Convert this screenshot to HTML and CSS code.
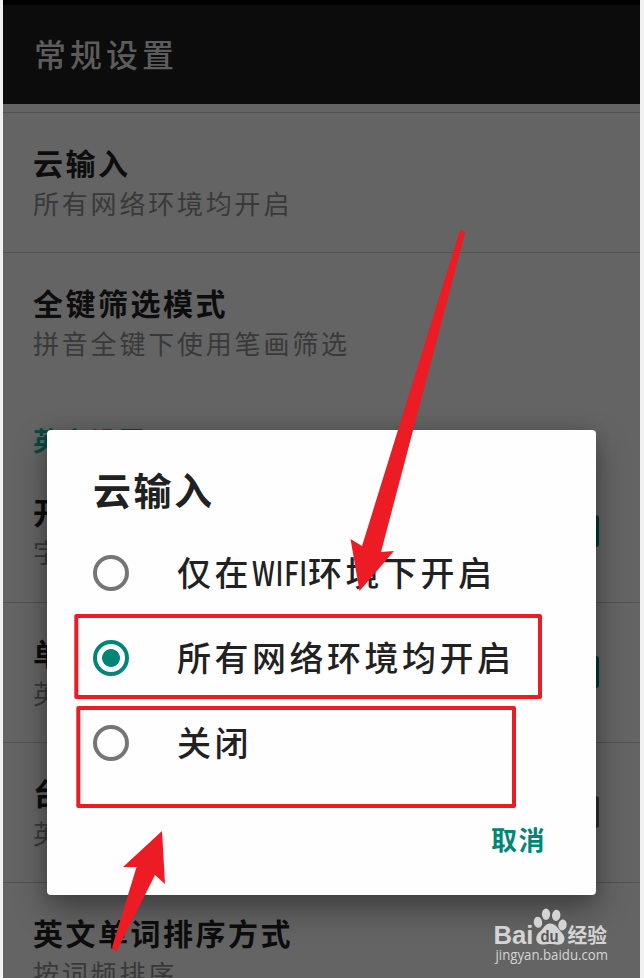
FILE: index.html
```html
<!DOCTYPE html>
<html lang="zh-CN">
<head>
<meta charset="utf-8">
<title>常规设置</title>
<link rel="stylesheet" href="styles.css">
</head>
<body>
<div class="screen">
  <div class="status"></div>
  <header class="bar">常规设置</header>
  <main class="list">
    <section class="row"><div class="name">云输入</div><div class="desc">所有网络环境均开启</div></section>
    <section class="row"><div class="name">全键筛选模式</div><div class="desc">拼音全键下使用笔画筛选</div></section>
    <h2 class="category">英文设置</h2>
    <section class="row first"><div class="name">开</div><div class="desc">字</div><span class="check"></span></section>
    <section class="row"><div class="name">单</div><div class="desc">英</div><span class="check"></span></section>
    <section class="row"><div class="name">台</div><div class="desc">英</div><span class="check off"></span></section>
    <section class="row"><div class="name">英文单词排序方式</div><div class="desc">按词频排序</div></section>
  </main>
  <div class="dialog">
    <div class="dialog-title">云输入</div>
    <div class="option"><span class="radio"></span><span>仅在<span class="latin"><span>WIFI</span></span>环境下开启</span></div>
    <div class="option"><span class="radio on"></span><span>所有网络环境均开启</span></div>
    <div class="option"><span class="radio"></span><span>关闭</span></div>
    <div class="actions"><span>取消</span></div>
  </div>
</div>
<svg class="marks" width="644" height="978" viewBox="0 0 644 978">
  <g fill="none" stroke="#ed1c24" stroke-width="4" stroke-linejoin="round">
    <rect x="76.3" y="616" width="463.7" height="81"/>
    <rect x="78.3" y="708" width="435.7" height="98"/>
  </g>
  <g fill="#ed1c24">
    <path d="M459.3 232.2Q460.5 229.5 463 230.3Q465.3 231.3 464.8 234L381 552L394 551L359.500 591L350.500 539L362 546Z"/>
    <path d="M162 831L165 884L155 875L117.500 949.500Q115.500 951.800 113.500 950.300Q111.700 949 112.300 946.500L136.500 867L123 867Z"/>
  </g>
</svg>
<svg class="watermark" width="130" height="70" viewBox="485 900 130 70">
  <g fill="#d4d4d4">
    <text class="brand" x="493.500" y="943.500" textLength="40" lengthAdjust="spacingAndGlyphs">Bai</text>
    <ellipse cx="538" cy="922.300" rx="4.200" ry="5.500" transform="rotate(-8 538 922.300)"/>
    <ellipse cx="546" cy="914.300" rx="4.100" ry="5.700"/>
    <ellipse cx="556.200" cy="915.300" rx="4.200" ry="5.600" transform="rotate(8 556.200 915.300)"/>
    <ellipse cx="562.500" cy="925" rx="4.200" ry="5.500" transform="rotate(10 562.500 925)"/>
    <path d="M550 923.500C545 923.500 543 929.500 539.500 932C534.500 936 535 944.500 542.500 944.500C546 944.500 547 944 550 944C553 944 555 944.700 558 944.700C565.500 944.700 566 937 562 933C558.500 929.500 556 923.500 550 923.500Z"/>
    <text class="cn" x="567.500" y="942.500" textLength="39.500" lengthAdjust="spacingAndGlyphs">经验</text>
    <text class="url" x="495.500" y="959.500" textLength="112.500" lengthAdjust="spacingAndGlyphs">jingyan.baidu.com</text>
  </g>
  <text class="du" x="540.500" y="941.500" textLength="18" lengthAdjust="spacingAndGlyphs">du</text>
</svg>
</body>
</html>
```
FILE: styles.css
```css
* { box-sizing: border-box; }
body {
  margin: 0;
  width: 644px;
  height: 978px;
  overflow: hidden;
  position: relative;
  background: #f1f1f1;
  font-family: "Noto Sans CJK SC", sans-serif;
}
.screen {
  position: relative;
  width: 637px;
  height: 978px;
  margin-left: 3px;
  overflow: hidden;
  background: #646464;
}
.status { height: 5px; background: #000; }
.bar {
  height: 99px;
  padding: 0 0 0 31px;
  line-height: 97px;
  font-size: 32px;
  font-weight: 500;
  letter-spacing: 4px;
  color: #5c5c5c;
  background: #0c0c0c;
}
.list { padding-top: 8px; }
.row {
  position: relative;
  height: 140.2px;
  padding: 28px 0 0 30px;
  border-top: 1px solid #525252;
  white-space: nowrap;
}
.row.first { border-top-color: transparent; }
.name {
  height: 43px;
  line-height: 43px;
  font-size: 30px;
  font-weight: 700;
  letter-spacing: 2.5px;
  color: #0d0d0d;
}
.desc {
  height: 38px;
  line-height: 38px;
  font-size: 26px;
  letter-spacing: 2.8px;
  color: #393939;
}
.category {
  height: 69px;
  margin: 0;
  padding-left: 30px;
  line-height: 96px;
  font-size: 26px;
  font-weight: 700;
  letter-spacing: 2.5px;
  color: #004b43;
}
.check {
  position: absolute;
  right: 41px;
  top: 53px;
  width: 32px;
  height: 32px;
  border-radius: 3px;
  background: #003832;
}
.check.off { background: #2d2d2d; }
.dialog {
  position: absolute;
  left: 44px;
  top: 430px;
  width: 549px;
  height: 465px;
  padding: 23px 46px 0;
  display: flex;
  flex-direction: column;
  border-radius: 4px;
  background: #fefefe;
  color: #212121;
  box-shadow: 0 14px 32px rgba(0,0,0,.36), 0 0 16px rgba(0,0,0,.12);
}
.dialog-title {
  height: 77px;
  line-height: 72px;
  font-size: 38px;
  font-weight: 700;
  letter-spacing: 2.5px;
}
.option {
  height: 85px;
  display: flex;
  align-items: center;
  gap: 48px;
  font-size: 34px;
  font-weight: 500;
  letter-spacing: 3.5px;
  line-height: 50px;
  white-space: nowrap;
}
.option > span:last-child { margin-top: -2px; }
.latin { display: inline-block; width: 56px; letter-spacing: 1px; }
.latin span { display: inline-block; transform: scaleX(.75); transform-origin: 0 50%; }
.radio {
  flex: none;
  width: 36px;
  height: 36px;
  border: 4px solid #757575;
  border-radius: 50%;
}
.radio.on {
  border-color: #008577;
  background: radial-gradient(circle, #008577 8.5px, transparent 9.3px);
}
.actions {
  display: flex;
  justify-content: flex-end;
  padding-top: 35px;
  padding-right: 4px;
  line-height: 38px;
  font-size: 26px;
  font-weight: 700;
  letter-spacing: 1.5px;
  color: #008577;
}
.marks { position: absolute; left: 0; top: 0; }
.watermark { position: absolute; left: 485px; top: 900px; }
.brand { font: 700 25px "Liberation Sans", sans-serif; }
.cn { font: 700 20px "Noto Sans CJK SC", sans-serif; }
.url { font: 15px "Open Sans", sans-serif; }
.du { font: 700 16px "Liberation Sans", sans-serif; fill: #555; }
```
